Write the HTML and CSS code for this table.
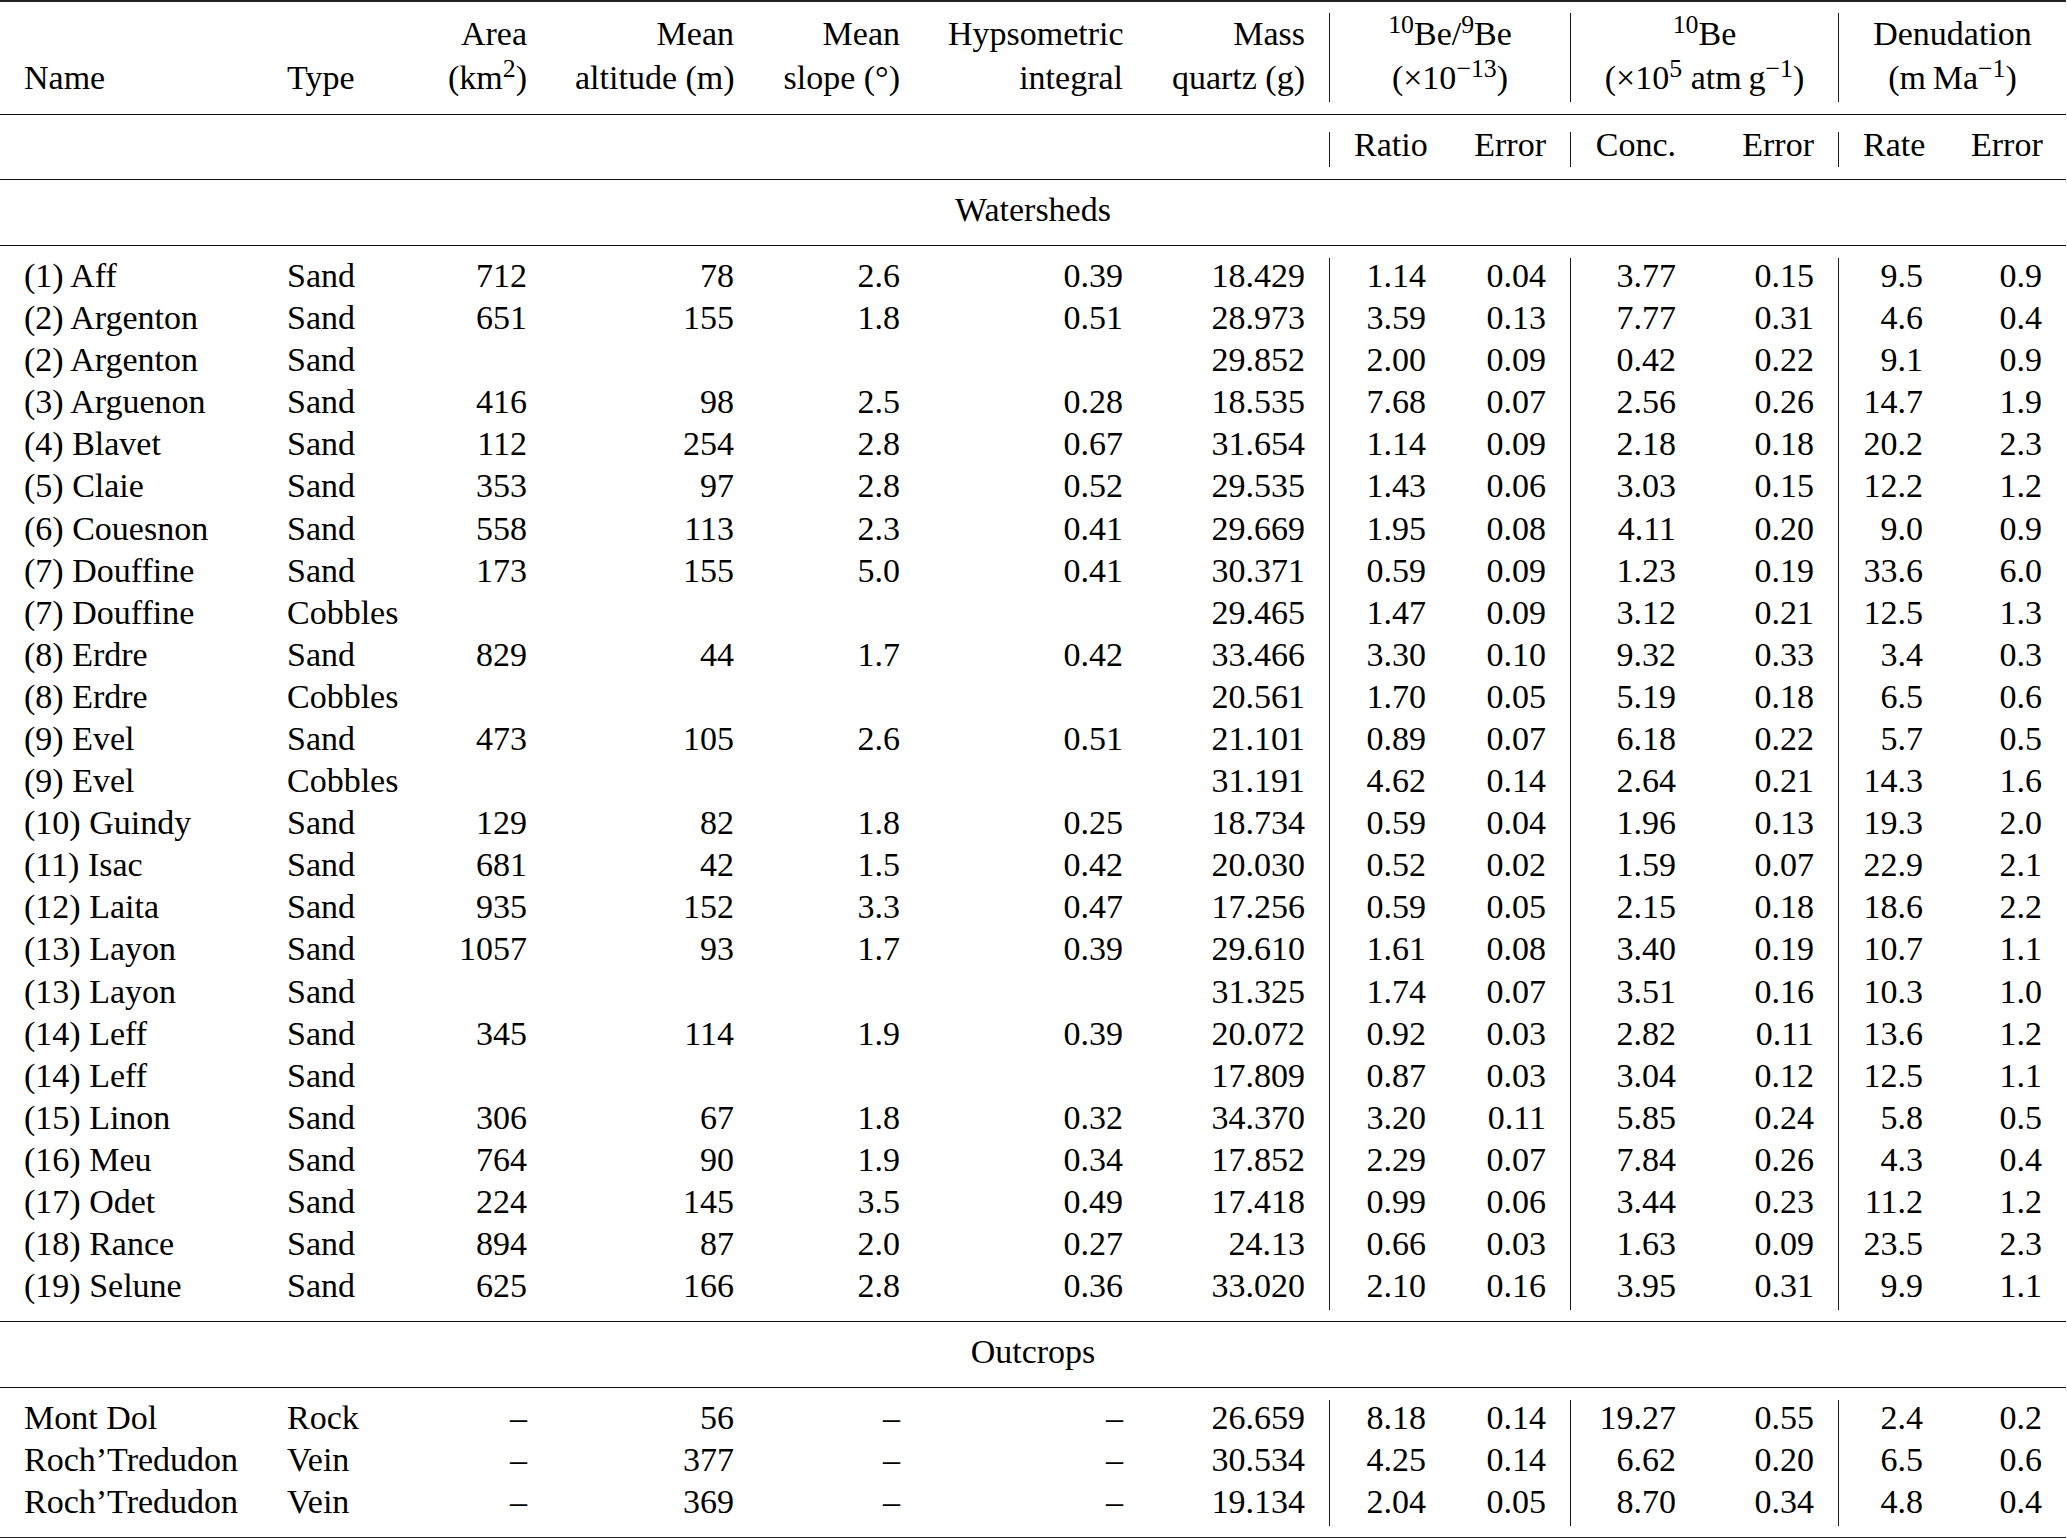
FILE: index.html
```html
<!DOCTYPE html>
<html lang="en">
<head>
<meta charset="utf-8">
<title>Table</title>
<link rel="stylesheet" href="styles.css">
</head>
<body>
<table class="tbl">
<colgroup>
<col class="w1"><col class="w2"><col class="w3"><col class="w4"><col class="w5"><col class="w6"><col class="w7"><col class="w8"><col class="w9"><col class="w10"><col class="w11"><col class="w12"><col class="w13">
</colgroup>
<thead>
<tr><td colspan="13" class="rule r-top"><div class="line thick"></div></td></tr>
<tr class="h1">
<th></th><th></th><th>Area</th><th>Mean</th><th>Mean</th><th>Hypsometric</th><th>Mass</th>
<th colspan="2" class="c vl"><sup>10</sup>Be/<sup>9</sup>Be</th>
<th colspan="2" class="c vl"><sup>10</sup>Be</th>
<th colspan="2" class="c vl">Denudation</th>
</tr>
<tr class="h2">
<th class="l">Name</th><th class="l">Type</th><th>(km<sup>2</sup>)</th><th>altitude (m)</th><th>slope (°)</th><th>integral</th><th>quartz (g)</th>
<th colspan="2" class="c vl">(×10<sup>−13</sup>)</th>
<th colspan="2" class="c vl">(×10<sup>5</sup> atm&#8201;g<sup>−1</sup>)</th>
<th colspan="2" class="c vl">(m&#8201;Ma<sup>−1</sup>)</th>
</tr>
<tr><td colspan="13" class="rule r-head"><div class="line"></div></td></tr>
<tr class="sub">
<td colspan="7"></td><td class="vl">Ratio</td><td>Error</td><td class="vl">Conc.</td><td>Error</td><td class="vl">Rate</td><td>Error</td>
</tr>
</thead>
<tbody>
<tr><td colspan="13" class="rule r-sub"><div class="line"></div></td></tr>
<tr class="sec"><td colspan="13" class="c">Watersheds</td></tr>
<tr><td colspan="13" class="rule r-sec"><div class="line"></div></td></tr>
<tr class="d"><td class="l">(1) Aff</td><td class="l">Sand</td><td>712</td><td>78</td><td>2.6</td><td>0.39</td><td>18.429</td><td class="vl">1.14</td><td>0.04</td><td class="vl">3.77</td><td>0.15</td><td class="vl">9.5</td><td>0.9</td></tr>
<tr class="d"><td class="l">(2) Argenton</td><td class="l">Sand</td><td>651</td><td>155</td><td>1.8</td><td>0.51</td><td>28.973</td><td class="vl">3.59</td><td>0.13</td><td class="vl">7.77</td><td>0.31</td><td class="vl">4.6</td><td>0.4</td></tr>
<tr class="d"><td class="l">(2) Argenton</td><td class="l">Sand</td><td></td><td></td><td></td><td></td><td>29.852</td><td class="vl">2.00</td><td>0.09</td><td class="vl">0.42</td><td>0.22</td><td class="vl">9.1</td><td>0.9</td></tr>
<tr class="d"><td class="l">(3) Arguenon</td><td class="l">Sand</td><td>416</td><td>98</td><td>2.5</td><td>0.28</td><td>18.535</td><td class="vl">7.68</td><td>0.07</td><td class="vl">2.56</td><td>0.26</td><td class="vl">14.7</td><td>1.9</td></tr>
<tr class="d"><td class="l">(4) Blavet</td><td class="l">Sand</td><td>112</td><td>254</td><td>2.8</td><td>0.67</td><td>31.654</td><td class="vl">1.14</td><td>0.09</td><td class="vl">2.18</td><td>0.18</td><td class="vl">20.2</td><td>2.3</td></tr>
<tr class="d"><td class="l">(5) Claie</td><td class="l">Sand</td><td>353</td><td>97</td><td>2.8</td><td>0.52</td><td>29.535</td><td class="vl">1.43</td><td>0.06</td><td class="vl">3.03</td><td>0.15</td><td class="vl">12.2</td><td>1.2</td></tr>
<tr class="d"><td class="l">(6) Couesnon</td><td class="l">Sand</td><td>558</td><td>113</td><td>2.3</td><td>0.41</td><td>29.669</td><td class="vl">1.95</td><td>0.08</td><td class="vl">4.11</td><td>0.20</td><td class="vl">9.0</td><td>0.9</td></tr>
<tr class="d"><td class="l">(7) Douffine</td><td class="l">Sand</td><td>173</td><td>155</td><td>5.0</td><td>0.41</td><td>30.371</td><td class="vl">0.59</td><td>0.09</td><td class="vl">1.23</td><td>0.19</td><td class="vl">33.6</td><td>6.0</td></tr>
<tr class="d"><td class="l">(7) Douffine</td><td class="l">Cobbles</td><td></td><td></td><td></td><td></td><td>29.465</td><td class="vl">1.47</td><td>0.09</td><td class="vl">3.12</td><td>0.21</td><td class="vl">12.5</td><td>1.3</td></tr>
<tr class="d"><td class="l">(8) Erdre</td><td class="l">Sand</td><td>829</td><td>44</td><td>1.7</td><td>0.42</td><td>33.466</td><td class="vl">3.30</td><td>0.10</td><td class="vl">9.32</td><td>0.33</td><td class="vl">3.4</td><td>0.3</td></tr>
<tr class="d"><td class="l">(8) Erdre</td><td class="l">Cobbles</td><td></td><td></td><td></td><td></td><td>20.561</td><td class="vl">1.70</td><td>0.05</td><td class="vl">5.19</td><td>0.18</td><td class="vl">6.5</td><td>0.6</td></tr>
<tr class="d"><td class="l">(9) Evel</td><td class="l">Sand</td><td>473</td><td>105</td><td>2.6</td><td>0.51</td><td>21.101</td><td class="vl">0.89</td><td>0.07</td><td class="vl">6.18</td><td>0.22</td><td class="vl">5.7</td><td>0.5</td></tr>
<tr class="d"><td class="l">(9) Evel</td><td class="l">Cobbles</td><td></td><td></td><td></td><td></td><td>31.191</td><td class="vl">4.62</td><td>0.14</td><td class="vl">2.64</td><td>0.21</td><td class="vl">14.3</td><td>1.6</td></tr>
<tr class="d"><td class="l">(10) Guindy</td><td class="l">Sand</td><td>129</td><td>82</td><td>1.8</td><td>0.25</td><td>18.734</td><td class="vl">0.59</td><td>0.04</td><td class="vl">1.96</td><td>0.13</td><td class="vl">19.3</td><td>2.0</td></tr>
<tr class="d"><td class="l">(11) Isac</td><td class="l">Sand</td><td>681</td><td>42</td><td>1.5</td><td>0.42</td><td>20.030</td><td class="vl">0.52</td><td>0.02</td><td class="vl">1.59</td><td>0.07</td><td class="vl">22.9</td><td>2.1</td></tr>
<tr class="d"><td class="l">(12) Laita</td><td class="l">Sand</td><td>935</td><td>152</td><td>3.3</td><td>0.47</td><td>17.256</td><td class="vl">0.59</td><td>0.05</td><td class="vl">2.15</td><td>0.18</td><td class="vl">18.6</td><td>2.2</td></tr>
<tr class="d"><td class="l">(13) Layon</td><td class="l">Sand</td><td>1057</td><td>93</td><td>1.7</td><td>0.39</td><td>29.610</td><td class="vl">1.61</td><td>0.08</td><td class="vl">3.40</td><td>0.19</td><td class="vl">10.7</td><td>1.1</td></tr>
<tr class="d"><td class="l">(13) Layon</td><td class="l">Sand</td><td></td><td></td><td></td><td></td><td>31.325</td><td class="vl">1.74</td><td>0.07</td><td class="vl">3.51</td><td>0.16</td><td class="vl">10.3</td><td>1.0</td></tr>
<tr class="d"><td class="l">(14) Leff</td><td class="l">Sand</td><td>345</td><td>114</td><td>1.9</td><td>0.39</td><td>20.072</td><td class="vl">0.92</td><td>0.03</td><td class="vl">2.82</td><td>0.11</td><td class="vl">13.6</td><td>1.2</td></tr>
<tr class="d"><td class="l">(14) Leff</td><td class="l">Sand</td><td></td><td></td><td></td><td></td><td>17.809</td><td class="vl">0.87</td><td>0.03</td><td class="vl">3.04</td><td>0.12</td><td class="vl">12.5</td><td>1.1</td></tr>
<tr class="d"><td class="l">(15) Linon</td><td class="l">Sand</td><td>306</td><td>67</td><td>1.8</td><td>0.32</td><td>34.370</td><td class="vl">3.20</td><td>0.11</td><td class="vl">5.85</td><td>0.24</td><td class="vl">5.8</td><td>0.5</td></tr>
<tr class="d"><td class="l">(16) Meu</td><td class="l">Sand</td><td>764</td><td>90</td><td>1.9</td><td>0.34</td><td>17.852</td><td class="vl">2.29</td><td>0.07</td><td class="vl">7.84</td><td>0.26</td><td class="vl">4.3</td><td>0.4</td></tr>
<tr class="d"><td class="l">(17) Odet</td><td class="l">Sand</td><td>224</td><td>145</td><td>3.5</td><td>0.49</td><td>17.418</td><td class="vl">0.99</td><td>0.06</td><td class="vl">3.44</td><td>0.23</td><td class="vl">11.2</td><td>1.2</td></tr>
<tr class="d"><td class="l">(18) Rance</td><td class="l">Sand</td><td>894</td><td>87</td><td>2.0</td><td>0.27</td><td>24.13</td><td class="vl">0.66</td><td>0.03</td><td class="vl">1.63</td><td>0.09</td><td class="vl">23.5</td><td>2.3</td></tr>
<tr class="d"><td class="l">(19) Selune</td><td class="l">Sand</td><td>625</td><td>166</td><td>2.8</td><td>0.36</td><td>33.020</td><td class="vl">2.10</td><td>0.16</td><td class="vl">3.95</td><td>0.31</td><td class="vl">9.9</td><td>1.1</td></tr>
<tr><td colspan="13" class="rule r-end"><div class="line"></div></td></tr>
<tr class="sec"><td colspan="13" class="c">Outcrops</td></tr>
<tr><td colspan="13" class="rule r-sec2"><div class="line"></div></td></tr>
<tr class="d"><td class="l">Mont Dol</td><td class="l">Rock</td><td>–</td><td>56</td><td>–</td><td>–</td><td>26.659</td><td class="vl">8.18</td><td>0.14</td><td class="vl">19.27</td><td>0.55</td><td class="vl">2.4</td><td>0.2</td></tr>
<tr class="d"><td class="l">Roch’Tredudon</td><td class="l">Vein</td><td>–</td><td>377</td><td>–</td><td>–</td><td>30.534</td><td class="vl">4.25</td><td>0.14</td><td class="vl">6.62</td><td>0.20</td><td class="vl">6.5</td><td>0.6</td></tr>
<tr class="d"><td class="l">Roch’Tredudon</td><td class="l">Vein</td><td>–</td><td>369</td><td>–</td><td>–</td><td>19.134</td><td class="vl">2.04</td><td>0.05</td><td class="vl">8.70</td><td>0.34</td><td class="vl">4.8</td><td>0.4</td></tr>
<tr><td colspan="13" class="rule r-bot"><div class="line thick"></div></td></tr>
</tbody>
</table>
</body>
</html>
```

FILE: styles.css
```css
html, body {
  margin: 0;
  padding: 0;
  background: #fff;
}

body {
  font-family: "Liberation Serif", "Times New Roman", serif;
  font-size: 34px;
  color: #000;
}

.tbl {
  border-collapse: separate;
  border-spacing: 0;
  table-layout: fixed;
  width: 2066px;
}

.w1 { width: 263px; }
.w2 { width: 159.5px; }
.w3 { width: 128.5px; }
.w4 { width: 207px; }
.w5 { width: 166px; }
.w6 { width: 223px; }
.w7 { width: 182px; }
.w8 { width: 121px; }
.w9 { width: 120px; }
.w10 { width: 130px; }
.w11 { width: 138px; }
.w12 { width: 109px; }
.w13 { width: 119px; }

.tbl th,
.tbl td {
  padding: 0 24px 6px;
  line-height: 36px;
  white-space: nowrap;
  vertical-align: top;
  font-weight: normal;
  text-align: right;
}

.tbl .l { text-align: left; }
.tbl .c { text-align: center; }

.tbl .vl { border-left: 1px solid #1a1a1a; }

.tbl sup {
  font-size: 0.76em;
  line-height: 0;
  vertical-align: 0.48em;
}

/* header rows */
.tbl .h1 th { padding-top: 2.5px; padding-bottom: 6.5px; }
.tbl .h2 th { padding-top: 1.5px; padding-bottom: 6.5px; }

.tbl .sub td { line-height: 25px; padding-top: 0; padding-bottom: 10px; }

.tbl .d td { padding-bottom: 6.1px; }
.tbl .sec td { padding-top: 0; padding-bottom: 6px; }

/* rules */
.tbl td.rule {
  padding: 0;
  line-height: 0;
  font-size: 0;
}

.line {
  height: 1px;
  background: #111;
}

.line.thick {
  height: 2px;
  background: #222;
}

.tbl td.r-top { padding-bottom: 11px; }
.tbl td.r-head { padding-top: 12px; padding-bottom: 17px; }
.tbl td.r-sub { padding-top: 12px; padding-bottom: 11.6px; }
.tbl td.r-sec { padding-top: 11.8px; padding-bottom: 11.6px; }
.tbl td.r-end { padding-top: 10.9px; padding-bottom: 11.5px; }
.tbl td.r-sec2 { padding-top: 11.5px; padding-bottom: 11.5px; }
.tbl td.r-bot { padding-top: 11.2px; }
```
